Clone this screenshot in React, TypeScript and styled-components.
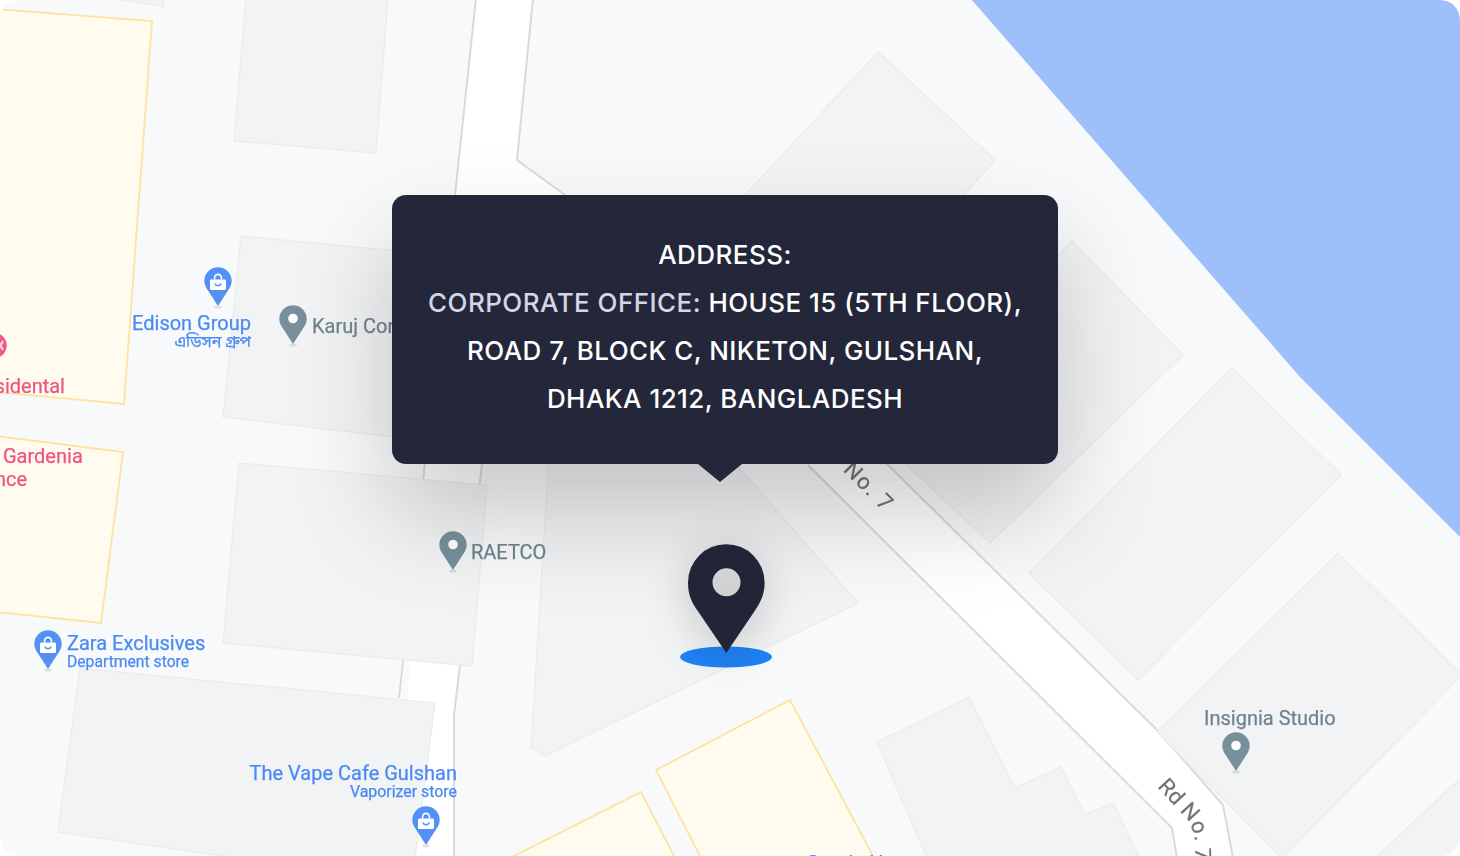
import React from "react";
import styled, { createGlobalStyle } from "styled-components";

const Global = createGlobalStyle`
  html, body { margin: 0; padding: 0; background: #ffffff; }
  #root { width: 1460px; height: 856px; overflow: hidden; }
`;

const Frame = styled.section`
  position: relative;
  width: 1460px;
  height: 856px;
  border-radius: 20px;
  overflow: hidden;
  background: #f8f9fb;
`;

const MapArt = styled.svg`
  display: block;
  width: 1460px;
  height: 856px;
  filter: blur(0.45px);
`;

const Water = styled.polygon`
  fill: #9dc0fa;
`;
const Road = styled.polygon`
  fill: #ffffff;
`;
const RoadEdge = styled.polyline`
  fill: none;
  stroke: #d9dade;
  stroke-width: 2;
`;
const Block = styled.polygon`
  fill: #f2f3f5;
  stroke: #e9ebee;
  stroke-width: 1.2;
`;
const Plot = styled.polygon`
  fill: #fffbef;
  stroke: #fde3a0;
  stroke-width: 1.8;
`;

const toneColor = { blue: "#4a8af4", gray: "#70848f", pink: "#ee5580", road: "#70757a" } as const;

const Label = styled.text<{ $tone: keyof typeof toneColor; $size?: number; $spread?: number }>`
  font-family: Roboto, "Noto Sans", "Noto Sans Bengali", sans-serif;
  font-size: ${(p) => p.$size ?? 20}px;
  letter-spacing: ${(p) => p.$spread ?? 0}px;
  fill: ${(p) => toneColor[p.$tone]};
  stroke: ${(p) => toneColor[p.$tone]};
  stroke-width: 0.25px;
`;

const Popup = styled.aside`
  position: absolute;
  left: 392px;
  top: 195px;
  box-sizing: border-box;
  width: 666px;
  height: 269px;
  padding: 36px 0 0;
  border-radius: 14px;
  background: #24273a;
  box-shadow: 0 50px 100px rgba(0, 0, 0, 0.2);
  text-align: center;
  font-family: Inter, "Noto Sans", sans-serif;
  font-size: 26px;
  line-height: 48px;
  font-weight: 450;
  letter-spacing: 0.45px;
  color: #ffffff;

  &::after {
    content: "";
    position: absolute;
    left: 306px;
    top: 269px;
    border-left: 22px solid transparent;
    border-right: 22px solid transparent;
    border-top: 18px solid #24273a;
  }
`;

const Line = styled.div`
  white-space: nowrap;
`;

const Muted = styled.span`
  color: #d3d6e6;
`;

const MainPin = styled.svg`
  position: absolute;
  left: 670px;
  top: 534px;
  width: 112px;
  height: 144px;
  overflow: visible;
`;

const PinBody = styled.path`
  fill: #222538;
  fill-rule: evenodd;
  filter: drop-shadow(0 8px 22px rgba(0, 0, 0, 0.2));
`;

const PinBase = styled.ellipse`
  fill: #1f82f4;
`;

const BLUE = "#5491f5";
const GRAY = "#78909c";

function Marker({ x, y, color, shop }: { x: number; y: number; color: string; shop?: boolean }) {
  return (
    <g transform={`translate(${x} ${y})`}>
      <ellipse cx="0" cy="25" rx="4" ry="1.6" fill="#000" opacity="0.1" />
      <path
        d="M0 24 L-10 8.5 C-12.5 5 -13.7 2 -13.7 -1 A13.7 13.7 0 0 1 13.7 -1 C13.7 2 12.5 5 10 8.5 Z"
        fill={color}
      />
      {shop ? (
        <>
          <rect x="-8" y="-2.5" width="16" height="10.5" rx="1.2" fill="#fff" />
          <path d="M-3.4 -2.5 V-4.2 A3.4 3.4 0 0 1 3.4 -4.2 V-2.5" fill="none" stroke="#fff" strokeWidth="1.6" />
          <path d="M-3.2 1.6 A3.4 3.4 0 0 0 3.2 1.6" fill="none" stroke={color} strokeWidth="1.5" />
        </>
      ) : (
        <circle cx="0" cy="-1.5" r="4.8" fill="#fff" />
      )}
    </g>
  );
}

const blocks = [
  "107,-2 163,6 164,-2",
  "246,-2 388,-2 376,153 234,141",
  "241,236 410,252 395,437 223,417",
  "239,463 487,485 472,666 223,643",
  "80,668 435,703 415,860 250,860 58,832",
  "550,440 715,440 858,603 545,756 531,748",
  "878,52 995,160 870,300 745,195",
  "1072,241 1183,355 990,543 880,440",
  "1232,368 1341,475 1138,680 1029,573",
  "1338,553 1462,675 1282,858 1157,732",
  "1375,858 1462,777 1462,858",
  "877,742 969,697 1015,788 1061,767 1085,815 1113,803 1140,858 927,858",
];

const plots = [
  "-4,9 152,21 124,404 -4,392",
  "-4,436 123,452 101,623 -4,612",
  "656,770 790,700 874,858 701,858",
  "510,858 641,792 675,858",
];

export default function App() {
  return (
    <>
      <Global />
      <Frame>
        <MapArt viewBox="0 0 1460 856" role="img" aria-label="Map of Gulshan, Dhaka">
          <defs>
            <path id="rd-no-7" d="M1157 787 L1186 818 C1192 826 1195 835 1195 842 L1196 885" />
          </defs>
          <Water points="970,-2 985,15 1300,377 1462,539 1462,-2" />
          <Road points="476,-2 533,-2 517,160 482,463 460,665 454,715 454,858 395,858 425,463" />
          <Road points="517,160 565,195 888,465 1157,730 1223,805 1233,858 1177,858 1172,828 808,465 500,300" />
          <RoadEdge points="476,-2 455,195 425,463 399,698" />
          <RoadEdge points="533,-2 517,160 565,195" />
          <RoadEdge points="482,463 460,665 454,715 454,858" />
          <RoadEdge points="565,195 888,465 1157,730 1223,805 1233,858" />
          <RoadEdge points="808,465 1172,828 1177,858" />
          {blocks.map((p) => (
            <Block key={p} points={p} />
          ))}
          {plots.map((p) => (
            <Plot key={p} points={p} />
          ))}

          <Marker x={218} y={282} color={BLUE} shop />
          <Marker x={293} y={320} color={GRAY} />
          <Marker x={453} y={546} color={GRAY} />
          <Marker x={48} y={645} color={BLUE} shop />
          <Marker x={426} y={821} color={BLUE} shop />
          <Marker x={1236} y={747} color={GRAY} />
          <g>
            <circle cx="-6" cy="345.5" r="12.7" fill="#ee5a87" />
            <path d="M-2 341 L3 350 M3 341 L-2 350" stroke="#fbd3df" strokeWidth="2.2" fill="none" />
          </g>

          <Label $tone="pink" x={65} y={393} textAnchor="end">Residental</Label>
          <Label $tone="pink" x={3} y={463}>Gardenia</Label>
          <Label $tone="pink" x={27} y={486} textAnchor="end">Residence</Label>
          <Label $tone="blue" x={251} y={330} textAnchor="end">Edison Group</Label>
          <Label $tone="blue" $size={16} x={251} y={347} textAnchor="end">এডিসন গ্রুপ</Label>
          <Label $tone="gray" x={312} y={333}>Karuj Cor</Label>
          <Label $tone="gray" x={471} y={559}>RAETCO</Label>
          <Label $tone="blue" x={67} y={650}>Zara Exclusives</Label>
          <Label $tone="blue" $size={15.7} x={67} y={667}>Department store</Label>
          <Label $tone="blue" x={457} y={780} textAnchor="end">The Vape Cafe Gulshan</Label>
          <Label $tone="blue" $size={15.9} x={457} y={797} textAnchor="end">Vaporizer store</Label>
          <Label $tone="blue" x={806} y={870}>Gonda Ha</Label>
          <Label $tone="gray" x={1204} y={725}>Insignia Studio</Label>
          <Label $tone="road" $size={22} $spread={1.6} x={-41} y={0} transform="translate(846 474) rotate(45)">Rd No. 7</Label>
          <Label $tone="road" $size={22} $spread={0.5}>
            <textPath href="#rd-no-7">Rd No. 7</textPath>
          </Label>
        </MapArt>

        <Popup>
          <Line>ADDRESS:</Line>
          <Line>
            <Muted>CORPORATE OFFICE:</Muted> HOUSE 15 (5TH FLOOR),
          </Line>
          <Line>ROAD 7, BLOCK C, NIKETON, GULSHAN,</Line>
          <Line>DHAKA 1212, BANGLADESH</Line>
        </Popup>

        <MainPin viewBox="670 534 112 144" aria-hidden="true">
          <PinBase cx="726" cy="657" rx="46" ry="10.5" />
          <PinBody d="M726.3 653 L698.5 612 C691 602 688 594 688 582.5 A38.3 38.3 0 0 1 764.6 582.5 C764.6 594 761 602 754 612 Z M726.5 568.3 A14 14 0 1 0 726.5 596.3 A14 14 0 1 0 726.5 568.3 Z" />
        </MainPin>
      </Frame>
    </>
  );
}
